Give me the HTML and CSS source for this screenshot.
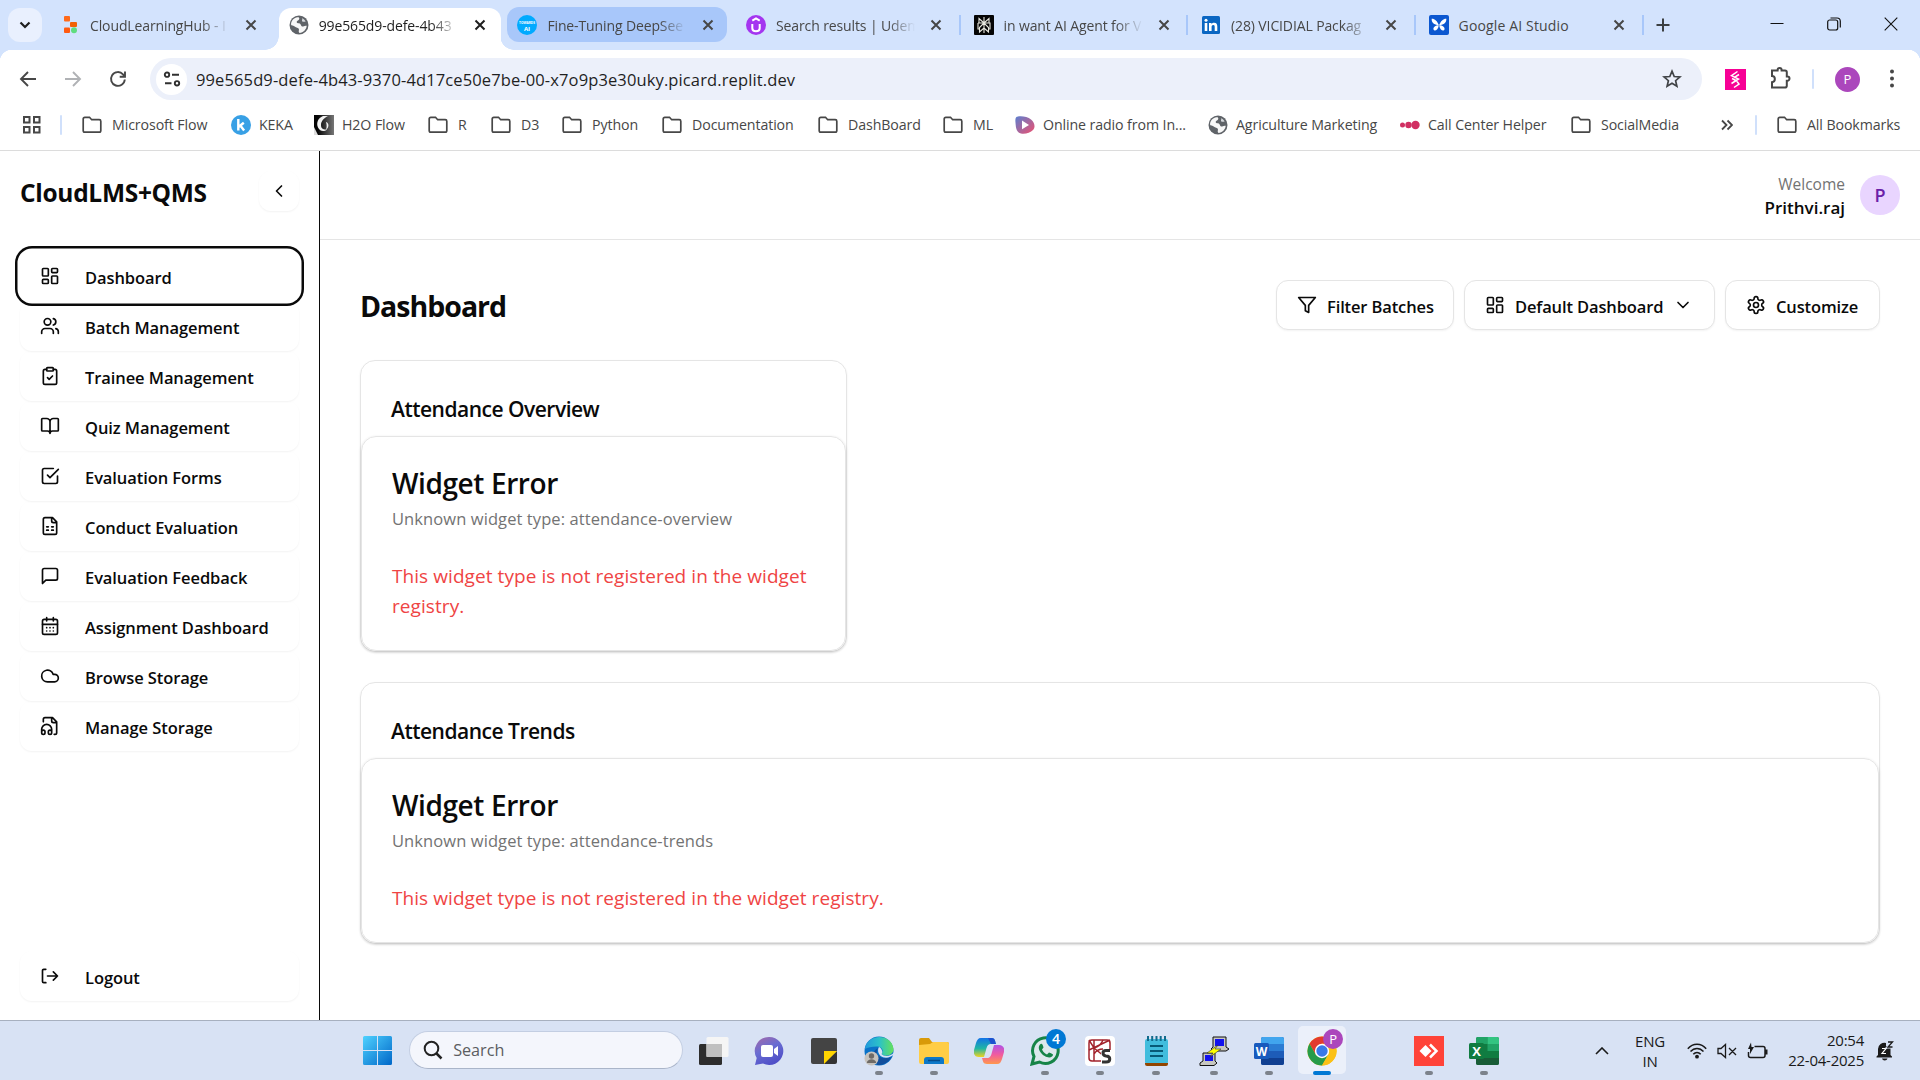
FILE: index.html
```html
<!DOCTYPE html>
<html lang="en">
<head>
<meta charset="utf-8">
<title>CloudLMS+QMS Dashboard</title>
<link rel="stylesheet" href="styles.css">
</head>
<body>
<svg class="defs" width="0" height="0">
  <defs>
    <symbol id="x" viewBox="0 0 12 12"><path d="M1.5 1.5l9 9M10.500 1.500l-9 9" stroke="currentColor" stroke-width="2" fill="none"/></symbol>
    <symbol id="folder" viewBox="0 0 20 18"><path d="M1.200 14.500V3c0-1 .6-1.700 1.600-1.700h4.700l2.200 2.400h7.500c1 0 1.600.7 1.600 1.600v9.200c0 1-.6 1.700-1.600 1.700H2.800c-1 0-1.600-.7-1.600-1.700z" fill="none" stroke="#474747" stroke-width="1.700"/></symbol>
    <symbol id="globe" viewBox="0 0 20 20"><circle cx="10" cy="10" r="9.500" fill="#5f6368"/><path d="M2 9.500C2.200 5.500 5 2.600 8.500 2.200c2.500-.1 2 2.200.8 3-1.200.8-1.800 1.200-1.500 2.300.3 1 2 .6 3 1.100 1.400.6.8 2.500 2.200 2.900 1.500.4 2-1.200 4.700-.8-.4 3.800-3.300 6.900-7.200 7.200-1.600-1.600-.2-2.700-.6-4-.4-1.400-2.800-.9-4.200-2.400C4.600 10.300 3 11.500 2 9.500z" fill="#fff" opacity=".95"/><path d="M13 3.200c.8 1.300-.6 2.300.3 3.200.9.900 2.300.2 3.400.2-.9-1.600-2.100-2.700-3.700-3.400z" fill="#d5d8dc"/></symbol>
    <symbol id="layout" viewBox="0 0 24 24"><rect width="7" height="9" x="3" y="3" rx="1"/><rect width="7" height="5" x="14" y="3" rx="1"/><rect width="7" height="9" x="14" y="12" rx="1"/><rect width="7" height="5" x="3" y="16" rx="1"/></symbol>
  </defs>
</svg>

<header class="tabstrip">
  <button class="tab-search"><svg width="12" height="8" viewBox="0 0 12 8"><path d="M1.500 1.500L6 6l4.500-4.500" fill="none" stroke="#1f1f1f" stroke-width="2.200"/></svg></button>
  <div class="tab early">
    <svg class="fav" viewBox="0 0 20 20"><rect x="4" y="1" width="6" height="5.500" rx="1" fill="#ff6a1a"/><rect x="10" y="7" width="7" height="5" rx="1" fill="#f26207"/><rect x="4" y="12.500" width="6" height="5.500" rx="1" fill="#ff5a10"/><circle cx="14" cy="15.200" r="3" fill="#5fdd7f"/></svg>
    <span class="tab-title">CloudLearningHub - I</span><svg class="close"><use href="#x"/></svg>
  </div>
  <div class="tab early active">
    <svg class="fav"><use href="#globe"/></svg>
    <span class="tab-title">99e565d9-defe-4b43</span><svg class="close"><use href="#x"/></svg>
  </div>
  <div class="tab early hover">
    <svg class="fav" viewBox="0 0 20 20"><circle cx="10" cy="10" r="10" fill="#0af"/><text x="10" y="8.500" font-size="3.200" text-anchor="middle" fill="#fff" font-weight="700">TOWARDS</text><text x="10" y="15.500" font-size="6" text-anchor="middle" fill="#fff" font-weight="700">AI</text></svg>
    <span class="tab-title">Fine-Tuning DeepSee</span><svg class="close"><use href="#x"/></svg>
  </div>
  <div class="tab">
    <svg class="fav" viewBox="0 0 20 20"><circle cx="10" cy="10" r="10" fill="#a435f0"/><path d="M6.300 9v4.200c0 2 1.500 3 3.700 3s3.700-1 3.700-3V9M6.300 5.700L10 3.500l3.700 2.200" fill="none" stroke="#fff" stroke-width="2"/></svg>
    <span class="tab-title">Search results | Udem</span><svg class="close"><use href="#x"/></svg>
  </div>
  <div class="tab sep">
    <svg class="fav" viewBox="0 0 20 20"><rect width="20" height="20" rx="1" fill="#050505"/><path d="M10 2v16M5 3.500l5 4.500 5-4.500V8H5zM4 8h12v6h-2M4 8v6h2M10 8l-4.500 4.500V17L10 13l4.500 4V12.500z" fill="none" stroke="#e9e9e0" stroke-width="1.100"/></svg>
    <span class="tab-title">in want AI Agent for V</span><svg class="close"><use href="#x"/></svg>
  </div>
  <div class="tab sep">
    <svg class="fav" viewBox="0 0 20 20"><rect x="1" y="1" width="18" height="18" rx="1.500" fill="#0a66c2"/><path d="M3.700 8h2.600v8H3.700zM8 8h2.500v1.200c.6-1 1.500-1.400 2.600-1.400 2.500 0 3.200 1.500 3.200 3.800V16h-2.600v-4c0-1.200-.2-2-1.400-2s-1.700.9-1.700 2v4H8z" fill="#fff"/><circle cx="5" cy="5.300" r="1.500" fill="#fff"/></svg>
    <span class="tab-title">(28) VICIDIAL Packag</span><svg class="close"><use href="#x"/></svg>
  </div>
  <div class="tab sep">
    <svg class="fav" viewBox="0 0 20 20"><rect width="20" height="20" rx="2" fill="#0b57d0"/><path d="M9.800 10C8.300 6 5.500 3.500 2.700 3.700c-.4 3.600 2.200 6.300 7.100 6.300zM10.200 10c1.500-4 4.300-6.500 7.100-6.300.4 3.600-2.200 6.300-7.100 6.300zM9.800 10.200c-3.400.1-5.800 1.900-5.300 4.200.6 2.300 4.900.8 5.300-4.200zM10.200 10.200c3.400.1 5.800 1.900 5.300 4.200-.6 2.300-4.900.8-5.300-4.200z" fill="#fff"/></svg>
    <span class="tab-title full">Google AI Studio</span><svg class="close"><use href="#x"/></svg>
  </div>
  <div class="new-tab"><svg width="14" height="14" viewBox="0 0 14 14"><path d="M7 .5v13M.5 7h13" stroke="#3c4043" stroke-width="2"/></svg></div>
  <div class="window-controls">
    <svg width="14" height="14" viewBox="0 0 14 14"><path d="M.5 6.500h13" stroke="#111"/></svg>
    <svg width="14" height="14" viewBox="0 0 14 14"><rect x=".7" y="3" width="10" height="10" rx="2" fill="none" stroke="#111" stroke-width="1.200"/><path d="M3.500 1h6.500c2 0 3.300 1.300 3.300 3.300V10.500" fill="none" stroke="#111" stroke-width="1.200"/></svg>
    <svg width="14" height="14" viewBox="0 0 14 14"><path d="M.7.7l12.600 12.600M13.300.7L.7 13.300" stroke="#111" stroke-width="1.100"/></svg>
  </div>
</header>

<div class="toolbar">
  <div class="nav-buttons">
    <svg width="18" height="18" viewBox="0 0 18 18"><path d="M17 9H2.500M9 2L2 9l7 7" fill="none" stroke="#474747" stroke-width="1.900"/></svg>
    <svg width="18" height="18" viewBox="0 0 18 18"><path d="M1 9h14.500M9 2l7 7-7 7" fill="none" stroke="#b0b2b5" stroke-width="1.900"/></svg>
    <svg width="18" height="18" viewBox="0 0 18 18"><path d="M15.800 9.500A6.900 6.900 0 1 1 14 4.300l1.500 1.700M16 1.500v5.300h-5.300" fill="none" stroke="#474747" stroke-width="1.900"/></svg>
  </div>
  <div class="omnibox">
    <span class="site-info"><svg width="18" height="16" viewBox="0 0 18 16"><g fill="none" stroke="#303030" stroke-width="1.900"><circle cx="4" cy="3.700" r="2.200"/><path d="M9 3.700h7M2 12.300h6.500"/><circle cx="14" cy="12.300" r="2.200"/></g></svg></span>
    <span class="url">99e565d9-defe-4b43-9370-4d17ce50e7be-00-x7o9p3e30uky.picard.replit.dev</span>
    <svg class="star" width="20" height="20" viewBox="0 0 20 20"><path d="M10 2.200l2.200 5.300 5.700.5-4.300 3.700 1.300 5.600L10 14.300l-4.900 3 1.300-5.600L2.100 8l5.700-.5z" fill="none" stroke="#404346" stroke-width="1.700"/></svg>
  </div>
  <svg class="ext" width="21" height="21" viewBox="0 0 21 21"><rect width="21" height="21" fill="#f70095"/><path d="M12.500 2.500l-6 4.200 7 3.300-7 4.500M14 5.500L9 8.700M12 12.500l2 2.500-5 3.500M7 9.500l5 2.500" fill="none" stroke="#fff" stroke-width="1.500"/></svg>
  <svg class="puzzle" width="22" height="24" viewBox="0 0 22 24"><path d="M2 4.500h5.600V4a2 2 0 0 1 4 0v.5H15c1 0 1.800.7 1.800 1.800v4.200h.6a2 2 0 0 1 0 4.200h-.6v5c0 1-.8 1.800-1.800 1.800H2v-5.300c3.800 0 3.800-6.200 0-6.200z" fill="none" stroke="#474747" stroke-width="2"/></svg>
  <i class="divider"></i>
  <span class="profile">P</span>
  <svg class="menu" width="6" height="22" viewBox="0 0 6 22"><g fill="#474747"><circle cx="3" cy="3.500" r="2"/><circle cx="3" cy="10.500" r="2"/><circle cx="3" cy="17.500" r="2"/></g></svg>
</div>

<nav class="bookmarks">
  <span><svg width="18" height="18" viewBox="0 0 18 18"><g fill="none" stroke="#474747" stroke-width="2"><rect x="1" y="1" width="5.500" height="5.500"/><rect x="11" y="1" width="5.500" height="5.500"/><rect x="1" y="11" width="5.500" height="5.500"/><rect x="11" y="11" width="5.500" height="5.500"/></g></svg></span>
  <span><i class="divider"></i></span>
  <span><svg class="fold"><use href="#folder"/></svg>Microsoft Flow</span>
  <span class="site"><svg class="fav" viewBox="0 0 20 20"><circle cx="10" cy="10" r="10" fill="#38a0e5"/><path d="M7.300 4v11.500M12.800 7.800l-5 4M9.500 10.800l3.600 4.700" stroke="#fff" stroke-width="2.400" fill="none"/></svg>KEKA</span>
  <span class="site"><svg class="fav" viewBox="0 0 20 20"><defs><linearGradient id="h2o" x2="1"><stop offset=".2" stop-color="#050505"/><stop offset="1" stop-color="#777"/></linearGradient></defs><rect width="20" height="20" fill="url(#h2o)"/><path d="M9 1C4 3 2 8 4 12.500c2 4 6 4.500 9 2-3 .5-6-.5-6-4.500C7 6 10 3 14 1z" fill="#f2f2f2"/><path d="M12 7c3.500 1 3 6 0 8 .8-2.500 1-5 0-8z" fill="#f2f2f2"/><path d="M0 12l4 8H0z" fill="#ddd"/></svg>H2O Flow</span>
  <span><svg class="fold"><use href="#folder"/></svg>R</span>
  <span><svg class="fold"><use href="#folder"/></svg>D3</span>
  <span><svg class="fold"><use href="#folder"/></svg>Python</span>
  <span><svg class="fold"><use href="#folder"/></svg>Documentation</span>
  <span><svg class="fold"><use href="#folder"/></svg>DashBoard</span>
  <span><svg class="fold"><use href="#folder"/></svg>ML</span>
  <span class="site"><svg class="fav" viewBox="0 0 20 20"><defs><linearGradient id="radio" x2="1" y2="1"><stop stop-color="#5b7fd0"/><stop offset="1" stop-color="#f0506e"/></linearGradient></defs><path d="M1 2.500C3 .5 12 1 16 4.500s4.500 8 2 10.500-8 4.500-12 3.500S1 14 .7 10 0 4 1 2.500z" fill="url(#radio)"/><path d="M7 5.500v8.800l7-4.400z" fill="#fff"/></svg>Online radio from In...</span>
  <span class="site"><svg class="fav"><use href="#globe"/></svg>Agriculture Marketing</span>
  <span class="site"><svg class="fav" viewBox="0 0 20 20"><circle cx="2.500" cy="10" r="2.500" fill="#d12f62"/><circle cx="8.500" cy="10" r="3.200" fill="#d12f62"/><circle cx="15.500" cy="10" r="4.200" fill="#d12f62"/></svg>Call Center Helper</span>
  <span><svg class="fold"><use href="#folder"/></svg>SocialMedia</span>
  <span><svg width="12" height="12" viewBox="0 0 12 12"><path d="M1 1.500L5.500 6 1 10.500M6.500 1.500L11 6l-4.500 4.500" fill="none" stroke="#474747" stroke-width="1.800"/></svg></span>
  <span><i class="divider"></i></span>
  <span><svg class="fold"><use href="#folder"/></svg>All Bookmarks</span>
</nav>

<div class="page">
  <aside class="sidebar">
    <div class="brand"><h2>CloudLMS+QMS</h2><button class="collapse"><svg class="icon" viewBox="0 0 24 24"><path d="m15 18-6-6 6-6"/></svg></button></div>
    <nav class="side-nav">
      <a class="nav-item current"><svg class="icon"><use href="#layout"/></svg><span>Dashboard</span></a>
      <a class="nav-item"><svg class="icon" viewBox="0 0 24 24"><path d="M16 21v-2a4 4 0 0 0-4-4H6a4 4 0 0 0-4 4v2"/><circle cx="9" cy="7" r="4"/><path d="M22 21v-2a4 4 0 0 0-3-3.870M16 3.130a4 4 0 0 1 0 7.750"/></svg><span>Batch Management</span></a>
      <a class="nav-item"><svg class="icon" viewBox="0 0 24 24"><rect width="8" height="4" x="8" y="2" rx="1"/><path d="M16 4h2a2 2 0 0 1 2 2v14a2 2 0 0 1-2 2H6a2 2 0 0 1-2-2V6a2 2 0 0 1 2-2h2M9 14l2 2 4-4"/></svg><span>Trainee Management</span></a>
      <a class="nav-item"><svg class="icon" viewBox="0 0 24 24"><path d="M12 7v14M3 18a1 1 0 0 1-1-1V4a1 1 0 0 1 1-1h5a4 4 0 0 1 4 4 4 4 0 0 1 4-4h5a1 1 0 0 1 1 1v13a1 1 0 0 1-1 1h-6a3 3 0 0 0-3 3 3 3 0 0 0-3-3z"/></svg><span>Quiz Management</span></a>
      <a class="nav-item"><svg class="icon" viewBox="0 0 24 24"><path d="m9 11 3 3L22 4"/><path d="M21 12v7a2 2 0 0 1-2 2H5a2 2 0 0 1-2-2V5a2 2 0 0 1 2-2h11"/></svg><span>Evaluation Forms</span></a>
      <a class="nav-item"><svg class="icon" viewBox="0 0 24 24"><path d="M15 2H6a2 2 0 0 0-2 2v16a2 2 0 0 0 2 2h12a2 2 0 0 0 2-2V7zM14 2v4a2 2 0 0 0 2 2h4M8 13h2M14 13h2M8 17h2M14 17h2"/></svg><span>Conduct Evaluation</span></a>
      <a class="nav-item"><svg class="icon" viewBox="0 0 24 24"><path d="M21 15a2 2 0 0 1-2 2H7l-4 4V5a2 2 0 0 1 2-2h14a2 2 0 0 1 2 2z"/></svg><span>Evaluation Feedback</span></a>
      <a class="nav-item"><svg class="icon" viewBox="0 0 24 24"><path d="M8 2v4M16 2v4"/><rect width="18" height="18" x="3" y="4" rx="2"/><path d="M3 10h18M8 14h.01M12 14h.01M16 14h.01M8 18h.01M12 18h.01M16 18h.01"/></svg><span>Assignment Dashboard</span></a>
      <a class="nav-item"><svg class="icon" viewBox="0 0 24 24"><path d="M17.500 19H9a7 7 0 1 1 6.710-9h1.790a4.500 4.500 0 1 1 0 9Z"/></svg><span>Browse Storage</span></a>
      <a class="nav-item"><svg class="icon" viewBox="0 0 24 24"><path d="M4 7V4a2 2 0 0 1 2-2h9l5 5v13a2 2 0 0 1-2 2h-1M14 2v4a2 2 0 0 0 2 2h4"/><path d="M2 19a2 2 0 1 1 4 0v1a2 2 0 1 1-4 0v-4a6 6 0 0 1 12 0v4a2 2 0 1 1-4 0v-1a2 2 0 1 1 4 0"/></svg><span>Manage Storage</span></a>
    </nav>
    <a class="nav-item logout"><svg class="icon" viewBox="0 0 24 24"><path d="M7 4H4.500A1.500 1.500 0 0 0 3 5.500v13A1.500 1.500 0 0 0 4.500 20H7M16 17l5-5-5-5M21 12H9"/></svg><span>Logout</span></a>
  </aside>
  <main>
    <div class="topbar">
      <div class="user"><span>Welcome</span><strong>Prithvi.raj</strong></div><div class="avatar">P</div>
    </div>
    <div class="content">
      <div class="heading">
        <h1>Dashboard</h1>
        <button class="btn filter"><svg class="icon" viewBox="0 0 24 24"><path d="M22 3H2l8 9.460V19l4 2v-8.540z"/></svg><span>Filter Batches</span></button>
        <button class="btn default"><svg class="icon"><use href="#layout"/></svg><span>Default Dashboard</span><svg class="icon chev" viewBox="0 0 24 24"><path d="m6 9 6 6 6-6"/></svg></button>
        <button class="btn customize"><svg class="icon" viewBox="0 0 24 24"><path d="M12.220 2h-.44a2 2 0 0 0-2 2v.18a2 2 0 0 1-1 1.730l-.43.25a2 2 0 0 1-2 0l-.15-.08a2 2 0 0 0-2.730.73l-.22.38a2 2 0 0 0 .73 2.730l.15.1a2 2 0 0 1 1 1.720v.51a2 2 0 0 1-1 1.740l-.15.09a2 2 0 0 0-.73 2.730l.22.38a2 2 0 0 0 2.730.73l.15-.08a2 2 0 0 1 2 0l.43.25a2 2 0 0 1 1 1.730V20a2 2 0 0 0 2 2h.44a2 2 0 0 0 2-2v-.18a2 2 0 0 1 1-1.730l.43-.25a2 2 0 0 1 2 0l.15.08a2 2 0 0 0 2.730-.73l.22-.39a2 2 0 0 0-.73-2.730l-.15-.08a2 2 0 0 1-1-1.740v-.5a2 2 0 0 1 1-1.740l.15-.09a2 2 0 0 0 .73-2.730l-.22-.38a2 2 0 0 0-2.730-.73l-.15.08a2 2 0 0 1-2 0l-.43-.25a2 2 0 0 1-1-1.730V4a2 2 0 0 0-2-2z"/><circle cx="12" cy="12" r="3"/></svg><span>Customize</span></button>
      </div>
      <section class="widget narrow">
        <h3>Attendance Overview</h3>
        <div class="error"><h4>Widget Error</h4><p class="muted">Unknown widget type: attendance-overview</p><p class="red">This widget type is not registered in the widget registry.</p></div>
      </section>
      <section class="widget">
        <h3>Attendance Trends</h3>
        <div class="error"><h4>Widget Error</h4><p class="muted">Unknown widget type: attendance-trends</p><p class="red">This widget type is not registered in the widget registry.</p></div>
      </section>
    </div>
  </main>
</div>

<footer class="taskbar">
  <div class="app start"><svg width="30" height="30" viewBox="0 0 30 30"><defs><linearGradient id="win" x2="1" y2="1"><stop stop-color="#4fd2ff"/><stop offset="1" stop-color="#0067c8"/></linearGradient></defs><path d="M1.500 0H14v14H0V1.500A1.500 1.500 0 0 1 1.500 0zM15 0h12.500A1.500 1.500 0 0 1 29 1.500V14H15zM0 15h14v14H1.500A1.500 1.500 0 0 1 0 27.500zM15 15h14v12.500a1.500 1.500 0 0 1-1.500 1.500H15z" fill="url(#win)"/></svg></div>
  <div class="search"><svg width="20" height="20" viewBox="0 0 20 20"><circle cx="8.500" cy="8.500" r="6.800" fill="none" stroke="#222" stroke-width="2"/><path d="M13.500 13.500l5 5" stroke="#222" stroke-width="2.500"/></svg>Search</div>
  <div class="app"><svg width="30" height="30" viewBox="0 0 30 30"><rect y="8" width="23" height="21" rx="1.500" fill="#2d2d2d"/><rect x="7.500" y="1" width="22" height="20" rx="1.500" fill="#f5f5f5"/><path d="M7.500 8H23v13H7.500z" fill="#c0c0c0"/></svg></div>
  <div class="app"><svg width="30" height="30" viewBox="0 0 30 30"><defs><linearGradient id="chat" x2=".5" y2="1"><stop stop-color="#a56aa8"/><stop offset=".5" stop-color="#6a6dd2"/><stop offset="1" stop-color="#5050c8"/></linearGradient></defs><path d="M15 1a14 14 0 1 1-6 26.500L1 29l1.700-7A14 14 0 0 1 15 1z" fill="url(#chat)"/><rect x="7" y="9" width="12" height="12" rx="2" fill="#fff"/><path d="M20 13l4-3v10l-4-3z" fill="#fff"/></svg></div>
  <div class="app"><svg width="30" height="30" viewBox="0 0 30 30"><path d="M2 4a2 2 0 0 1 2-2h22a2 2 0 0 1 2 2v11L16 28H4a2 2 0 0 1-2-2z" fill="#444"/><path d="M28 15v11a2 2 0 0 1-2 2H15z" fill="#333"/><path d="M15 15h13L15 28z" fill="#ffd500"/></svg></div>
  <div class="app open"><svg width="30" height="30" viewBox="0 0 30 30"><defs><linearGradient id="ed" x2="1"><stop stop-color="#2198dc"/><stop offset=".5" stop-color="#2bc1c9"/><stop offset="1" stop-color="#65e15b"/></linearGradient></defs><circle cx="15" cy="15" r="14.500" fill="#0a72c8"/><path d="M.8 13C3-3 28-3 29.500 13c.2 6-9 9-12 4.500 3-3 0-7-5-7-5 0-9 1-11.700 2.500z" fill="url(#ed)"/><path d="M14 12c-4 6 2 13 13.500 9-3 6-9 8.500-14 8-6-4-6-14 .5-17z" fill="#124f9c"/><path d="M15 11c-2 3-1 9 5 10.500 4 .5 7-.5 10-3V16.500c-3 4-10 4.500-12.500 1.500 2-2 0-6-2.500-7z" fill="#d8e2f4"/><circle cx="7.500" cy="22.500" r="7" fill="#c6c3be"/><circle cx="7.500" cy="20" r="2.700" fill="#6e6a66"/><path d="M2.800 27c.5-5 9-5 9.400 0z" fill="#6e6a66"/></svg></div>
  <div class="app open"><svg width="30" height="30" viewBox="0 0 30 30"><path d="M0 4a2 2 0 0 1 2-2h8l3 4h15a2 2 0 0 1 2 2v4H0z" fill="#d99a08"/><path d="M0 9l11-1 3-2h14a2 2 0 0 1 2 2v18a2 2 0 0 1-2 2H2a2 2 0 0 1-2-2z" fill="#ffcd45"/><path d="M5 28v-4a3 3 0 0 1 3-3h14a3 3 0 0 1 3 3v4z" fill="#0d78c8"/><path d="M9 24.500h12" stroke="#064b88" stroke-width="1.500"/></svg></div>
  <div class="app"><svg width="30" height="30" viewBox="0 0 30 30"><defs><linearGradient id="c1" y2="1" x2="0"><stop stop-color="#1272e8"/><stop offset=".55" stop-color="#20b6a4"/><stop offset="1" stop-color="#f0d320"/></linearGradient><linearGradient id="c2" y2="1" x2="0"><stop stop-color="#b052e6"/><stop offset=".5" stop-color="#f05ba0"/><stop offset="1" stop-color="#ff984c"/></linearGradient></defs><path d="M7 2h10c4 0 4 3 5 6h-5c-3 0-4 2-5 6l-2 7H5c-4 0-6-3-5-7l2-7c1-3 2-5 5-5z" fill="url(#c1)"/><path d="M23 28H13c-4 0-4-3-5-6h5c3 0 4-2 5-6l2-7h5c4 0 6 3 5 7l-2 7c-1 3-2 5-5 5z" fill="url(#c2)"/><path d="M14 2h4c3 0 3 3 4 6h-5z" fill="#1c52cf"/></svg></div>
  <div class="app open"><svg width="30" height="30" viewBox="0 0 30 30"><path d="M2 28l2-7.500A12.800 12.800 0 1 1 9.500 26z" fill="#dce8ec" stroke="#168447" stroke-width="3"/><path d="M10 8.500c2-2 3 1 3.500 3L12 13.500c1.500 3 3 4 5 5l2-2c4 1.500 5 2 3 4-5 4-17-6-12-12z" fill="#168447"/></svg><b class="badge blue">4</b></div>
  <div class="app open"><svg width="30" height="30" viewBox="0 0 30 30"><rect width="30" height="30" rx="4" fill="#fff"/><g fill="none" stroke="#a3232c" stroke-width="1.500"><rect x="4" y="4" width="21" height="21" rx="3"/><path d="M9 4v21M4 14l21-10M9 12l16 13M4 4l5 8c4-1 7-3 9-8M9 18c2-3 5-5 9-5"/></g><path d="M16 14h11v14H16z" fill="#fff"/><path d="M25 14.500h-4c-4 0-4 5 0 5.500 5 0 5 6 0 6h-4" fill="none" stroke="#333" stroke-width="3"/></svg></div>
  <div class="app open notepad"><svg width="30" height="30" viewBox="0 0 30 30"><rect x="4" y="3" width="23" height="25" rx="2" fill="#41bddd"/><path d="M4 27h23v1a2 2 0 0 1-2 2H6a2 2 0 0 1-2-2z" fill="#924500"/><path d="M7 0v5M11.200 0v5M15.500 0v5M19.700 0v5M24 0v5" stroke="#126b8c" stroke-width="2"/><path d="M9 10h13M9 15h13M9 20h13" stroke="#075a77" stroke-width="2"/></svg></div>
  <div class="app open putty"><svg width="30" height="30" viewBox="0 0 30 30"><g stroke="#111" stroke-width="1"><path d="M14 1h13v10l3 2-3 2H14l-2-2 2-2z" fill="#c7c7c0"/><path d="M4 17h12v8l2 2-3 2.500H1V27l3-2z" fill="#c7c7c0"/></g><path d="M16 3h9v7h-9zM6 19h8v6H6z" fill="#1212ed"/><path d="M19 9l-11 8h6l-3 4 11-8h-6z" fill="#ff0" stroke="#333" stroke-width=".6"/></svg></div>
  <div class="app open word"><svg width="30" height="30" viewBox="0 0 30 30"><rect x="7" y="1" width="23" height="28" rx="2" fill="#1d5cb8"/><path d="M7 3a2 2 0 0 1 2-2h19a2 2 0 0 1 2 2v5H7z" fill="#41a5ee"/><path d="M7 8h23v7H7z" fill="#2b7cd3"/><path d="M7 22h23v5a2 2 0 0 1-2 2H9a2 2 0 0 1-2-2z" fill="#103f91"/><rect y="7" width="15" height="16" rx="1.500" fill="#185abd"/><text x="7.500" y="19.500" font-size="12" font-weight="700" fill="#fff" text-anchor="middle">W</text></svg></div>
  <div class="app open focused"><svg width="30" height="30" viewBox="0 0 30 30"><circle cx="15" cy="15" r="14.500" fill="#fbc116"/><path d="M2.500 7.700A14.500 14.500 0 0 1 27.600 7.700H15L8.700 18.600z" fill="#e33b2e"/><path d="M2.500 7.700A14.500 14.500 0 0 0 15 29.500l6.300-10.900H8.700z" fill="#269b49"/><path d="M15 7.700h12.600A14.500 14.500 0 0 1 15 29.500l6.300-10.900z" fill="#fbc116"/><circle cx="15" cy="15" r="7.200" fill="#fff"/><circle cx="15" cy="15" r="5.700" fill="#3879e8"/></svg><b class="badge purple">P</b></div>
  <div class="app gap"></div>
  <div class="app open"><svg width="30" height="30" viewBox="0 0 30 30"><rect width="30" height="30" fill="#ff4338"/><path d="M5.500 15l6-6 6 6-6 6z" fill="#fff"/><path d="M16 8.500l6.500 6.500-6.500 6.500" fill="none" stroke="#fff" stroke-width="2.500"/></svg></div>
  <div class="app open"><svg width="30" height="30" viewBox="0 0 30 30"><rect x="7" y="1" width="23" height="28" rx="2" fill="#107c41"/><path d="M7 3a2 2 0 0 1 2-2h9.500v7H7z" fill="#21a366"/><path d="M18.500 1H28a2 2 0 0 1 2 2v5H18.500z" fill="#33c481"/><path d="M18.500 8H30v7H18.500z" fill="#21a366"/><path d="M7 22h23v5a2 2 0 0 1-2 2H9a2 2 0 0 1-2-2z" fill="#185c37"/><rect y="7" width="15" height="16" rx="1.500" fill="#107c41"/><text x="7.500" y="19.500" font-size="13" font-weight="700" fill="#fff" text-anchor="middle">X</text></svg></div>
  <div class="tray">
    <svg width="14" height="8" viewBox="0 0 14 8"><path d="M1 7l6-6 6 6" fill="none" stroke="#1a1a1a" stroke-width="1.600"/></svg>
    <div class="lang">ENG<br>IN</div>
    <svg width="20" height="16" viewBox="0 0 20 16"><g fill="none" stroke="#1a1a1a" stroke-width="1.500"><path d="M.8 5.800c5-6 13.400-6 18.400 0M3.500 8.600c3.800-4.300 9.200-4.300 13 0M6.300 11.300c2.200-2.500 5.200-2.500 7.400 0"/></g><circle cx="10" cy="13.700" r="1.900" fill="#1a1a1a"/></svg>
    <svg width="20" height="16" viewBox="0 0 20 16"><path d="M1 5.500h3L8.500 1.500v13L4 10.500H1zM12 5l7 7M19 5l-7 7" fill="none" stroke="#1a1a1a" stroke-width="1.300"/></svg>
    <svg width="21" height="18" viewBox="0 0 21 18"><path d="M7.500 4.500H16a2 2 0 0 1 2 2v7a2 2 0 0 1-2 2H3.500a2 2 0 0 1-2-2V10" fill="none" stroke="#1a1a1a" stroke-width="1.500"/><path d="M18 7.500h2.500v5H18z" fill="#1a1a1a"/><path d="M4 .5L1 7h2v5l4-7H4.500z" fill="#1a1a1a"/></svg>
    <div class="clock">20:54<br>22-04-2025</div>
    <svg width="18" height="20" viewBox="0 0 18 20"><path d="M2 14V8a6.500 6.500 0 0 1 8-6v3h4.500v9l1.500 1.500v1H.5v-1zM6 17.500h5.500c-.5 2.500-5 2.500-5.500 0z" fill="#1a1a1a"/><path d="M6 7.500h4l-4 5h4" fill="none" stroke="#fff" stroke-width="1.200"/><path d="M12 1h4.500L12 6h4.500" fill="none" stroke="#d8e2f4" stroke-width="3"/><path d="M12 1h4.500L12 6h4.500" fill="none" stroke="#1a1a1a" stroke-width="1.300"/></svg>
  </div>
</footer>
</body>
</html>
```
FILE: styles.css
```css
* { box-sizing: border-box; }
body { margin: 0; width: 1920px; height: 1080px; overflow: hidden; display: flex; flex-direction: column; background: #fff; color: #0a0a0a; font-family: "Open Sans", "Noto Sans", sans-serif; }
h1, h2, h3, h4, p { margin: 0; }
button { font: inherit; color: inherit; border: 0; padding: 0; background: #fff; }
svg { display: block; flex: none; }
.defs { position: absolute; }
.fav { width: 20px; height: 20px; }
.icon { width: 20px; height: 20px; fill: none; stroke: currentColor; stroke-width: 2; stroke-linecap: round; stroke-linejoin: round; }
.divider { width: 2px; height: 20px; background: #d0e0fb; border-radius: 1px; }

/* Browser tabs */
.tabstrip { height: 50px; flex: none; display: flex; background: #d3e3fd; padding-left: 8px; position: relative; }
.tab-search { width: 34px; height: 34px; margin: 8px 4px 0 0; border-radius: 12px; background: #e9f0fe; display: flex; align-items: center; justify-content: center; }
.tab { width: 227.5px; height: 50px; display: flex; align-items: center; padding-left: 14px; font-size: 14px; color: #474747; position: relative; }
.tab.early { width: 228.7px; }
.tab-title { width: 142px; margin-left: 10px; letter-spacing: -0.12px; white-space: nowrap; mask-image: linear-gradient(to right, #000 112px, transparent 139px); }
.tab-title.full { mask-image: none; letter-spacing: 0.15px; }
.close { width: 12px; height: 12px; margin-left: 12px; }
.early .close { margin-left: 13px; }
.active { color: #1f1f1f; z-index: 1; }
.active::before { content: ""; position: absolute; left: 4px; top: 8px; width: 222px; height: 42px; background: #fff; border-radius: 12px 12px 0 0; z-index: -1; }
.active::after { content: ""; position: absolute; left: -10px; right: -11px; bottom: 0; height: 14px; z-index: -2; background: radial-gradient(circle at 0 0, transparent 13.500px, #fff 14px) left / 14px 14px no-repeat, radial-gradient(circle at 100% 0, transparent 13.500px, #fff 14px) right / 14px 14px no-repeat; }
.hover { z-index: 0; }
.hover::before { content: ""; position: absolute; left: 4px; top: 7px; width: 220px; height: 35px; background: #a8c7fa; border-radius: 12px; z-index: -1; }
.sep::before { content: ""; position: absolute; left: -1px; top: 15px; width: 2px; height: 20px; background: #a8c7fa; }
.new-tab { width: 44px; padding-left: 12px; display: flex; align-items: center; border-left: 2px solid #a8c7fa; height: 20px; margin-top: 15px; }
.window-controls { display: flex; gap: 43px; margin: 17px 22px 0 auto; }

/* Address bar */
.toolbar { height: 58px; flex: none; display: flex; align-items: center; background: radial-gradient(circle at 12px 12px, #fff 12px, #d3e3fd 12.500px) left top / 12px 12px no-repeat, radial-gradient(circle at 0 12px, #fff 12px, #d3e3fd 12.500px) right top / 12px 12px no-repeat, #fff; }
.nav-buttons { width: 150px; padding-left: 19px; display: flex; gap: 27px; }
.omnibox { width: 1552px; height: 42px; border-radius: 21px; background: #ecf0fa; display: flex; align-items: center; padding: 0 20px 0 6px; }
.site-info { width: 31px; height: 31px; border-radius: 50%; background: #fff; display: flex; align-items: center; justify-content: center; }
.url { font-size: 16.500px; letter-spacing: 0.12px; color: #1f1f1f; margin: 1px 0 0 9px; }
.star { margin-left: auto; }
.ext { margin-left: 23px; }
.puzzle { margin-left: 24px; margin-top: -3px; }
.toolbar .divider { margin-left: 20px; }
.profile { width: 25px; height: 25px; margin-left: 21px; border-radius: 50%; background: #ab47bc; color: #fff; font-size: 13px; line-height: 25px; text-align: center; }
.menu { margin-left: 29px; }

/* Bookmark bar */
.bookmarks { height: 43px; flex: none; padding: 0 0 9px 23px; border-bottom: 1px solid #dcdcdc; display: grid; grid-template-columns: 37px 22px 149px 83px 114px 63px 71px 100px 156px 125px 72px 193px 192px 171px 150px 34px 22px 1fr; font-size: 14.200px; color: #474747; letter-spacing: -0.1px; }
.bookmarks span { display: flex; align-items: center; gap: 10px; white-space: nowrap; }
.bookmarks .site { gap: 8px; }
.fold { width: 20px; height: 18px; }

/* Application */
.page { flex: 1; min-height: 0; display: flex; }
.sidebar { width: 320px; border-right: 1px solid #0a0a0a; padding: 20px 20px 19px; display: flex; flex-direction: column; }
.brand { display: flex; justify-content: space-between; height: 80px; }
.brand h2 { font-size: 24.500px; line-height: 44px; font-weight: 700; letter-spacing: -0.3px; }
.collapse { width: 40px; height: 40px; border-radius: 12px; display: flex; align-items: center; justify-content: center; box-shadow: 0 1px 2px rgba(0,0,0,.05); }
.side-nav { display: flex; flex-direction: column; }
.nav-item { height: 50px; padding-left: 20px; display: flex; align-items: center; gap: 25px; border-radius: 12px; box-shadow: 0 1px 2px rgba(0,0,0,.05); font-size: 16.500px; font-weight: 600; letter-spacing: -0.08px; }
.nav-item span, .btn span { padding-top: 2px; }
.current { box-shadow: 0 0 0 2.500px #fff, 0 0 0 5px #0a0a0a; background: #fff; z-index: 1; }
.logout { margin-top: auto; }
main { flex: 1; }
.topbar { height: 89px; border-bottom: 1px solid #e5e5e5; display: flex; justify-content: flex-end; align-items: center; gap: 15px; padding: 0 20px 0 0; }
.user { display: flex; flex-direction: column; align-items: flex-end; line-height: 24px; font-size: 15.500px; color: #737373; padding-top: 2px; }
.user strong { color: #0a0a0a; font-weight: 600; font-size: 17px; }
.avatar { width: 40px; height: 40px; border-radius: 50%; background: #e9d5ff; color: #6b21a8; font-size: 18px; font-weight: 600; line-height: 41px; text-align: center; }
.content { padding: 40px; display: flex; flex-direction: column; }
.heading { display: flex; align-items: center; gap: 10px; height: 50px; margin-bottom: 30px; }
h1 { font-size: 28.500px; font-weight: 700; letter-spacing: -1px; margin-right: auto; padding-top: 2px; }
.btn { height: 50px; border: 1px solid #e5e5e5; border-radius: 12px; box-shadow: 0 1px 2px rgba(0,0,0,.05); display: flex; align-items: center; gap: 10px; padding: 0 20px; font-size: 16.500px; font-weight: 600; letter-spacing: -0.13px; white-space: nowrap; }
.filter { width: 178px; }
.default { width: 251px; }
.customize { width: 155px; }
.widget { border: 1px solid #e5e5e5; border-radius: 15px; box-shadow: 0 1px 2px rgba(0,0,0,.08); margin-bottom: 30px; }
.narrow { width: 487px; }
.widget h3 { height: 75px; padding: 33px 30px 0; font-size: 21px; line-height: 30px; font-weight: 600; letter-spacing: -0.5px; }
.error { border: 1px solid #e5e5e5; border-radius: 15px; padding: 28px 30px 29px; box-shadow: 0 1px 3px rgba(0,0,0,.15); }
.error h4 { font-size: 28px; line-height: 36px; font-weight: 600; letter-spacing: -0.4px; }
.muted { color: #737373; font-size: 16.500px; letter-spacing: 0.09px; line-height: 25px; margin: 5px 0 30px; }
.red { color: #ef4444; font-size: 19px; letter-spacing: 0.07px; line-height: 30px; }

/* Taskbar */
.taskbar { height: 60px; flex: none; background: #d8e2f4; border-top: 1px solid #a7b0bf; display: flex; padding-left: 350px; }
.app { width: 55.150px; height: 59px; position: relative; display: flex; align-items: center; justify-content: center; }
.notepad { margin-left: 1.500px; }
.putty { margin-left: 2.500px; }
.word { margin-left: -0.500px; }
.focused { margin-left: -2px; }
.gap { margin-left: -3px; }
.search { width: 274px; height: 38px; margin: 10px 3px 0 4px; border-radius: 19px; border: 1px solid #c3cee2; border-bottom-color: #aab5c9; background: #f4f6fc; display: flex; align-items: center; gap: 10px; padding-left: 13px; font-size: 16.200px; color: #5b5d61; }
.open::after { content: ""; position: absolute; left: calc(50% - 4px); bottom: 5px; width: 8px; height: 4px; border-radius: 2px; background: #7c828b; }
.app svg { position: relative; }
.focused::before { content: ""; position: absolute; left: 4px; top: 5px; width: 48px; height: 48px; border-radius: 5px; background: #ebf0fa; }
.focused::after { left: calc(50% - 9px); width: 18px; background: #0078d4; }
.badge { position: absolute; left: 29px; top: 8px; width: 20px; height: 20px; border-radius: 50%; color: #fff; font-size: 14px; font-weight: 600; line-height: 20px; text-align: center; }
.blue { background: #0078d4; }
.purple { background: #ab47bc; font-weight: 400; font-size: 13px; }
.tray { margin-left: auto; padding-right: 26px; display: flex; align-items: center; font-size: 15px; line-height: 20px; color: #1a1a1a; letter-spacing: -0.25px; }
.lang { width: 30px; text-align: center; margin: 0 22px 0 26px; }
.tray svg + svg { margin-left: 10px; }
.clock { width: 90px; text-align: right; margin: -2px 12px 0 6px; }
```
